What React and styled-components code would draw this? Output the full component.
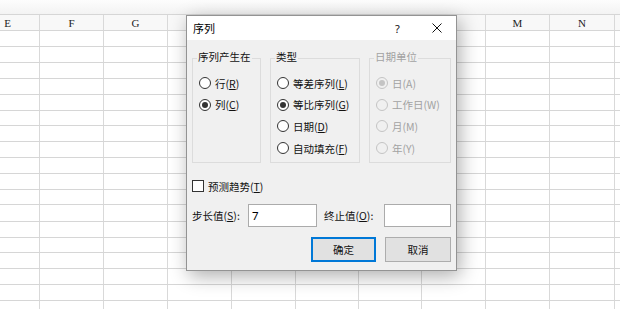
import React from "react";
import styled, { createGlobalStyle } from "styled-components";

const Global = createGlobalStyle`
  html, body { margin: 0; padding: 0; background: #fff; }
  body { overflow: hidden; }
`;

const UI_FONT = `"Noto Sans CJK SC", "Microsoft YaHei", "Noto Sans", sans-serif`;

const Root = styled.div`
  position: relative;
  width: 620px;
  height: 309px;
  overflow: hidden;
  background: #fff;
`;

const Sheet = styled.div`
  display: flex;
  flex-direction: column;
`;

const TopBand = styled.div`
  height: 15px;
  box-sizing: border-box;
  background: linear-gradient(#fdfdfd, #f3f3f3);
  border-bottom: 1px solid #d6d6d6;
`;

const Row = styled.div`
  display: flex;
  height: ${(p) => p.$h}px;
  box-sizing: border-box;
  margin-left: -24px;
  border-bottom: 1px solid #d6d6d6;
  background: ${(p) => (p.$header ? "#f8f8f8" : "#fff")};
`;

const Cell = styled.div`
  flex: none;
  width: ${(p) => p.$w}px;
  box-sizing: border-box;
  border-right: 1px solid #d9d9d9;
  display: flex;
  align-items: center;
  justify-content: center;
  font-family: "Liberation Serif", serif;
  font-size: 11px;
  color: #222;
  padding-top: 1px;
`;

const Dialog = styled.div`
  position: absolute;
  left: 186px;
  top: 15px;
  width: 271px;
  box-sizing: border-box;
  border: 1px solid #939393;
  background: #f0f0f0;
  box-shadow: 3px 5px 18px rgba(0, 0, 0, 0.32);
  font-family: ${UI_FONT};
  font-size: 10.5px;
  color: #111;
`;

const TitleBar = styled.div`
  height: 24px;
  display: flex;
  align-items: center;
  background: #fff;
  padding-left: 6px;
`;

const Title = styled.div`
  font-size: 11px;
  color: #000;
`;

const TitleButton = styled.div`
  width: 39px;
  height: 24px;
  display: flex;
  align-items: center;
  justify-content: center;
  margin-left: ${(p) => (p.$first ? "auto" : "0")};
  font-family: "Noto Sans", sans-serif;
  font-size: 11px;
  color: #111;
`;

const Body = styled.div`
  padding: 18px 5px 8px;
  display: flex;
  flex-direction: column;
`;

const Groups = styled.div`
  display: flex;
  gap: 9px;
  height: 105px;
`;

const GroupBox = styled.div`
  width: ${(p) => p.$w}px;
  box-sizing: border-box;
  border: 1px solid #dcdcdc;
  padding-left: 6px;
`;

const Legend = styled.div`
  width: fit-content;
  margin: -9px 0 0 -2px;
  padding: 0 1px;
  line-height: 14px;
  background: #f0f0f0;
  color: ${(p) => (p.$disabled ? "#a2a2a2" : "#111")};
`;

const RadioList = styled.div`
  margin-top: 8.5px;
  display: flex;
  flex-direction: column;
`;

const RadioRow = styled.div`
  height: 21.6px;
  display: flex;
  align-items: center;
  gap: 4px;
  color: ${(p) => (p.$disabled ? "#a2a2a2" : "#111")};
  white-space: nowrap;
`;

const Circle = styled.span`
  flex: none;
  width: 12px;
  height: 12px;
  box-sizing: border-box;
  border-radius: 50%;
  border: 1px solid ${(p) => (p.$disabled ? "#c4c4c4" : "#333")};
  background: ${(p) => (p.$disabled ? "#f0f0f0" : "#fff")};
  display: flex;
  align-items: center;
  justify-content: center;
  &::after {
    content: "";
    display: ${(p) => (p.$checked ? "block" : "none")};
    width: 6px;
    height: 6px;
    border-radius: 50%;
    background: ${(p) => (p.$disabled ? "#c4c4c4" : "#333")};
  }
`;

const CheckRow = styled.div`
  margin-top: 15px;
  height: 16px;
  display: flex;
  align-items: center;
  gap: 4px;
`;

const Box = styled.span`
  flex: none;
  width: 12px;
  height: 12px;
  box-sizing: border-box;
  border: 1px solid #333;
  background: #fff;
`;

const FieldRow = styled.div`
  margin-top: 10px;
  height: 23px;
  display: flex;
  align-items: center;
`;

const FieldLabel = styled.div`
  flex: none;
  width: ${(p) => p.$w}px;
  margin-left: ${(p) => p.$ml || 0}px;
  white-space: nowrap;
`;

const TextBox = styled.div`
  flex: ${(p) => (p.$w ? "none" : "1")};
  width: ${(p) => (p.$w ? `${p.$w}px` : "auto")};
  height: 23px;
  box-sizing: border-box;
  border: 1px solid #ababab;
  background: #fff;
  padding-left: 3px;
  display: flex;
  align-items: center;
  font-family: "Noto Sans", sans-serif;
  font-size: 11.5px;
  color: #000;
`;

const ButtonRow = styled.div`
  margin-top: 10px;
  display: flex;
  justify-content: flex-end;
  gap: 9px;
`;

const Button = styled.div`
  width: ${(p) => p.$w}px;
  height: 25px;
  box-sizing: border-box;
  background: #e1e1e1;
  border: 1px solid ${(p) => (p.$primary ? "#0078d7" : "#adadad")};
  box-shadow: ${(p) => (p.$primary ? "inset 0 0 0 1px #0078d7" : "none")};
  display: flex;
  align-items: center;
  justify-content: center;
  color: #111;
`;

/* Only the column letters that are visible (not hidden by the dialog or the window edge) */
const colWidths = [64, 64, 64, 64, 64, 63, 63, 64, 64, 65, 64];
const colNames = ["E", "F", "G", "", "", "", "", "", "M", "N", ""];
const rowHeights = [16, 16, 16, 16, 16, 15, 16, 16, 16, 16, 15, 17, 16, 15, 16, 16, 16, 16];

function Radio({ label, checked, disabled }) {
  return (
    <RadioRow $disabled={disabled}>
      <Circle $checked={checked} $disabled={disabled} />
      <span>{label}</span>
    </RadioRow>
  );
}

export default function App() {
  return (
    <Root>
      <Global />
      <Sheet>
        <TopBand />
        <Row $h={16} $header>
          {colWidths.map((w, i) => (
            <Cell key={i} $w={w}>
              {colNames[i]}
            </Cell>
          ))}
        </Row>
        {rowHeights.map((h, r) => (
          <Row key={r} $h={h}>
            {colWidths.map((w, i) => (
              <Cell key={i} $w={w} />
            ))}
          </Row>
        ))}
      </Sheet>

      <Dialog>
        <TitleBar>
          <Title>序列</Title>
          <TitleButton $first>?</TitleButton>
          <TitleButton>
            <svg width="10" height="10" viewBox="0 0 10 10">
              <path d="M0.5 0.5 L9.5 9.5 M9.5 0.5 L0.5 9.5" stroke="#111" strokeWidth="1" fill="none" />
            </svg>
          </TitleButton>
        </TitleBar>
        <Body>
          <Groups>
            <GroupBox $w={69}>
              <Legend>序列产生在</Legend>
              <RadioList>
                <Radio label={<>行(<u>R</u>)</>} />
                <Radio label={<>列(<u>C</u>)</>} checked />
              </RadioList>
            </GroupBox>
            <GroupBox $w={90}>
              <Legend>类型</Legend>
              <RadioList>
                <Radio label={<>等差序列(<u>L</u>)</>} />
                <Radio label={<>等比序列(<u>G</u>)</>} checked />
                <Radio label={<>日期(<u>D</u>)</>} />
                <Radio label={<>自动填充(<u>F</u>)</>} />
              </RadioList>
            </GroupBox>
            <GroupBox $w={82}>
              <Legend $disabled>日期单位</Legend>
              <RadioList>
                <Radio label="日(A)" checked disabled />
                <Radio label="工作日(W)" disabled />
                <Radio label="月(M)" disabled />
                <Radio label="年(Y)" disabled />
              </RadioList>
            </GroupBox>
          </Groups>
          <CheckRow>
            <Box />
            <span>
              预测趋势(<u>T</u>)
            </span>
          </CheckRow>
          <FieldRow>
            <FieldLabel $w={56}>
              步长值(<u>S</u>):
            </FieldLabel>
            <TextBox $w={69}>7</TextBox>
            <FieldLabel $w={60} $ml={7}>
              终止值(<u>O</u>):
            </FieldLabel>
            <TextBox />
          </FieldRow>
          <ButtonRow>
            <Button $w={65} $primary>
              确定
            </Button>
            <Button $w={66}>取消</Button>
          </ButtonRow>
        </Body>
      </Dialog>
    </Root>
  );
}
